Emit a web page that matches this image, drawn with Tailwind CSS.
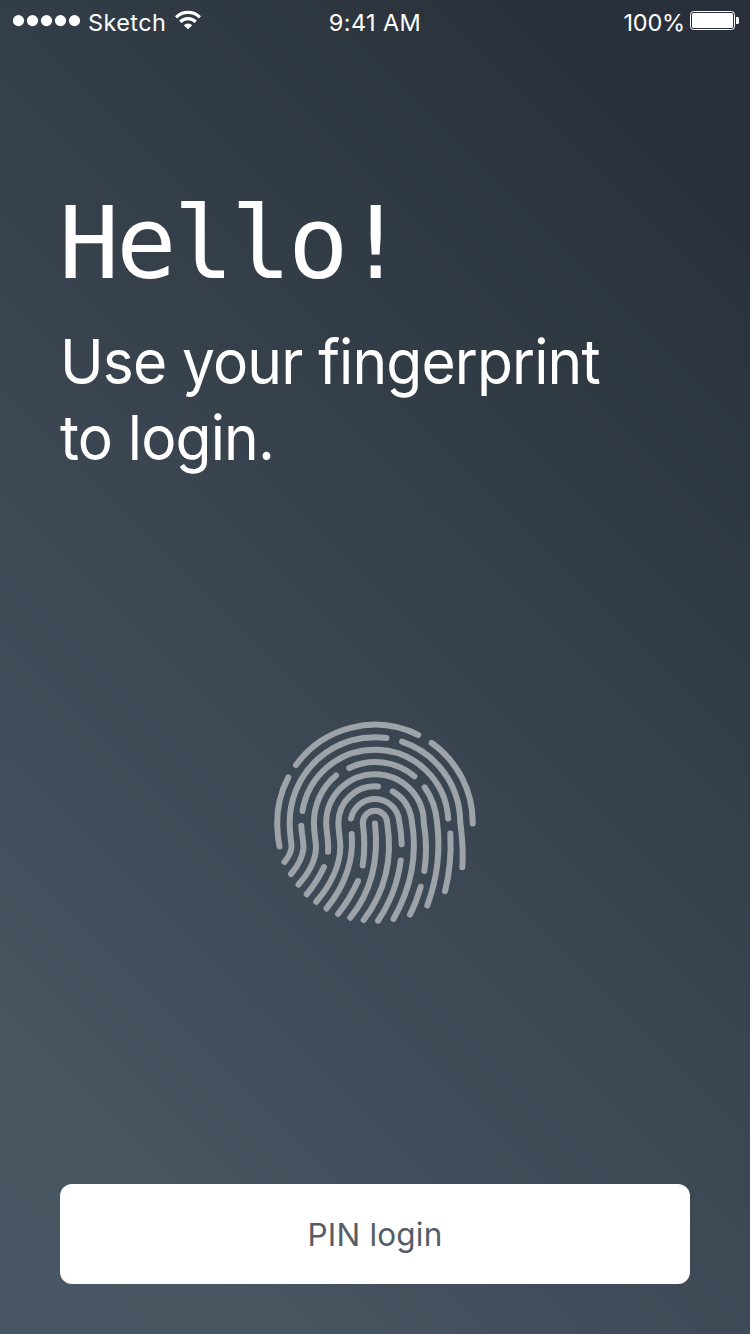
<!DOCTYPE html>
<html lang="en">
<head>
<meta charset="utf-8">
<title>Login</title>
<script src="https://cdn.jsdelivr.net/npm/@tailwindcss/browser@4"></script>
</head>
<body class="bg-[#29303b]">
<main class="w-[750px] h-[1334px] overflow-hidden flex flex-col text-white font-['Inter',sans-serif] bg-[linear-gradient(45deg,#485663_0%,#475661_13%,#414c5a_30%,#3a4551_49%,#333d47_65%,#2c353e_83%,#29303b_89%)]">
  <header class="h-10 shrink-0 grid grid-cols-3 items-start pl-[13px] pr-[11px] text-[23.5px] leading-[40px]">
    <div class="flex items-start">
      <svg class="block w-[68px] h-10 mr-[7px]" viewBox="0 0 68 40" fill="currentColor"><circle cx="5.5" cy="20.6" r="5.6"/><circle cx="19.5" cy="20.6" r="5.6"/><circle cx="33.5" cy="20.6" r="5.6"/><circle cx="47.5" cy="20.6" r="5.6"/><circle cx="61.5" cy="20.6" r="5.6"/></svg>
      <span class="tracking-[0.4px] pt-[3px]">Sketch</span>
      <svg class="block w-[26px] h-10 ml-[8.4px]" viewBox="175 0 26 40" fill="none" stroke="currentColor" stroke-width="3.2"><path d="M176.1 17.4A16.8 16.8 0 0 1 199.9 17.4"/><path d="M180.3 21.8A10.8 10.8 0 0 1 195.7 21.8"/><path d="M188 29.3L183.8 25.2A5.9 5.9 0 0 1 192.2 25.2Z" fill="currentColor" stroke="none"/></svg>
    </div>
    <span class="text-center pt-[3px] pr-[2px] tracking-[0.4px]">9:41 AM</span>
    <div class="flex items-start justify-end">
      <span class="pt-[3px] tracking-[-0.2px]">100%</span>
      <svg class="block w-[49px] h-10 ml-[5px]" viewBox="690 0 49 40"><rect x="690.5" y="11.5" width="44" height="18" rx="3" fill="none" stroke="currentColor"/><rect x="692" y="13" width="41" height="15" rx="1.5" fill="currentColor"/><path d="M736 17h1.5q1.5 0 1.5 1.5v4q0 1.5-1.5 1.5H736z" fill="currentColor"/></svg>
    </div>
  </header>
  <h1 class="mt-[144px] ml-[59px] h-[120px] text-[100px] leading-[120px] tracking-[-2.9px] font-['DejaVu_Sans_Mono',monospace]">Hello!</h1>
  <p class="mt-[20px] ml-[60px] h-[152px] text-[62px] leading-[76px] tracking-[-0.9px] whitespace-nowrap origin-left scale-x-[0.947]">Use your fingerprint<br>to login.</p>
  <svg class="block w-[210px] h-[210px] mt-[242px] mx-auto shrink-0" viewBox="270 718 210 210" fill="none" stroke="#9ea3aa" stroke-width="6" stroke-linecap="round">
    <path d="M296 765A97.4 97.4 0 0 1 418.3 735"/>
    <path d="M431.7 743A97.4 97.4 0 0 1 472.7 823.5"/>
    <path d="M288.3 777.3A97.6 97.6 0 0 0 277.2 825Q277.5 837 279.5 846.5"/>
    <path d="M386.5 738A85.3 85.3 0 0 0 289.7 825C289.7 834 291.3 840 291.5 847C291.3 852 288.5 857 284.5 862"/>
    <path d="M402 741.6A85.3 85.3 0 0 1 460.2 822C462.2 837 463.4 852 462.3 867.3"/>
    <path d="M302.5 811A73.2 73.2 0 0 1 375 749.7A73.2 73.2 0 0 1 448.2 818.5"/>
    <path d="M301.3 825.7C301.5 834 303.5 840 303.5 848C302.5 859 297 867 291 874"/>
    <path d="M450.3 833.5Q452 864 445 891.3"/>
    <path d="M349.2 768A60.7 60.7 0 0 1 414.3 776.3"/>
    <path d="M336 775.5A61 61 0 0 0 314 825C314 834 316 840 316 848C315.5 862 307 875 298.5 884.5"/>
    <path d="M424.7 787.3Q435.5 803 437 822Q442.5 864 427.3 905.5"/>
    <path d="M328 851.7C329 840 326.2 832 326.2 823A48.8 48.8 0 0 1 423.8 823Q428 848 424.3 871"/>
    <path d="M324 867Q317 882 306.7 894.3"/>
    <path d="M420.7 886.7Q416.5 902 410 914.7"/>
    <path d="M378 786.5A36.5 36.5 0 0 0 338.4 823C338.4 832 340.3 838 340.3 847C340 867 329 887 316.3 901.7"/>
    <path d="M392.7 791.3Q409.5 801 411.8 821C417.5 854 411 888 393.5 919"/>
    <path d="M351 818.5A24.4 24.4 0 0 1 399.2 821Q401.3 832 401.7 844.3"/>
    <path d="M351.7 834C354 862 343 888 326.5 908.5"/>
    <path d="M400.7 860.5C398 882 390 903 378 920.7"/>
    <path d="M362.7 865.5C365.5 848 364.5 836 362.8 823A12.2 12.2 0 0 1 387.2 823C393 860 385 892 363.7 920"/>
    <path d="M375 823.5C379 859 371 892 350.3 917.7"/>
    <path d="M358 881Q350 899 338 914"/>
  </svg>
  <button class="mt-auto mb-[50px] mx-[60px] h-[100px] shrink-0 rounded-xl bg-white text-[#555d68] text-[31.5px] leading-[40px] tracking-[0.2px] pt-[1px]">PIN login</button>
</main>
</body>
</html>
